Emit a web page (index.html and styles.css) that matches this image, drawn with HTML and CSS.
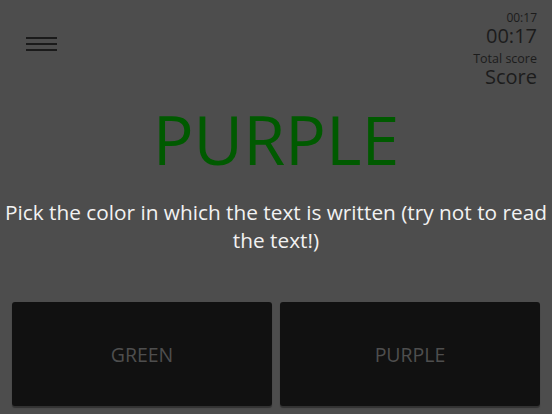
FILE: index.html
```html
<!DOCTYPE html>
<html lang="en">
<head>
    <meta charset="UTF-8">
    <meta name="viewport" content="width=device-width, initial-scale=1.0">
    <title>Color Game</title>
    <link rel="stylesheet" href="styles.css">
</head>
<body>
    <div class="screen">
        <div class="topbar">
            <button class="menu-btn" aria-label="Menu">
                <span></span><span></span><span></span>
            </button>
            <div class="stats">
                <div class="small">00:17</div>
                <div class="big">00:17</div>
                <div class="small label">Total score</div>
                <div class="big">Score</div>
            </div>
        </div>

        <div class="word">PURPLE</div>
        <p class="hint">Pick the color in which the text is written (try not to read the text!)</p>

        <div class="answers">
            <button class="answer">GREEN</button>
            <button class="answer">PURPLE</button>
        </div>
    </div>
</body>
</html>
```

FILE: styles.css
```css
html, body {
    margin: 0;
    padding: 0;
    height: 100%;
}
body {
    font-family: "Open Sans", "DejaVu Sans", sans-serif;
    background: #4d4d4d;
    color: #1c1c1c;
}
.screen {
    display: flex;
    flex-direction: column;
    height: 100%;
}
.topbar {
    display: flex;
    justify-content: space-between;
    align-items: flex-start;
    padding: 10px 15px 0 26px;
}
.menu-btn {
    background: none;
    border: 0;
    padding: 0;
    margin-top: 27px;
    width: 31px;
    display: flex;
    flex-direction: column;
    gap: 4px;
    cursor: pointer;
}
.menu-btn span {
    display: block;
    height: 2px;
    background: #1a1a1a;
}
.stats {
    text-align: right;
}
.stats .small {
    font-size: 12px;
    line-height: 15px;
}
.stats .label {
    font-size: 12.5px;
    margin-top: 4px;
}
.stats .big {
    font-size: 20px;
    line-height: 22px;
}
.word {
    text-align: center;
    font-size: 68px;
    line-height: 80px;
    color: #005a00;
    margin-top: 11px;
}
.hint {
    text-align: center;
    color: #f2f2f2;
    font-size: 20.8px;
    line-height: 28px;
    margin: 19px 4px 0;
}
.answers {
    margin-top: auto;
    display: grid;
    grid-template-columns: 1fr 1fr;
    gap: 8px;
    padding: 0 12px 8px;
}
.answer {
    height: 104px;
    background: #111;
    border: 0;
    border-radius: 3px;
    box-shadow: 0 2px 1px rgba(0,0,0,0.35);
    color: #4e4e4e;
    font-family: inherit;
    font-size: 19.5px;
}
```
